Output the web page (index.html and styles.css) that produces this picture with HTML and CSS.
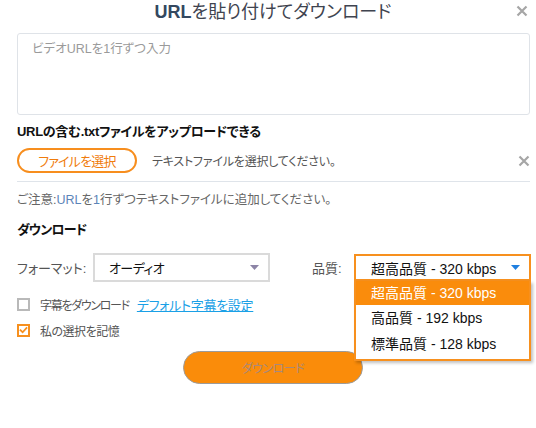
FILE: index.html
```html
<!DOCTYPE html>
<html lang="ja">
<head>
<meta charset="utf-8">
<link rel="stylesheet" href="styles.css">
</head>
<body>
<div class="dialog">
  <header class="head">
    <h1 class="title"><span class="title-url">URL</span>を貼り付けてダウンロード</h1>
    <span class="close">
      <svg width="12" height="12" viewBox="0 0 12 12"><path d="M1.5 1.5L10.5 10.5M10.5 1.5L1.5 10.5" stroke="#a6a6a6" stroke-width="2.2"/></svg>
    </span>
  </header>
  <div class="urlbox"><span class="placeholder">ビデオURLを1行ずつ入力</span></div>
  <div class="upload-label">URLの含む.txtファイルをアップロードできる</div>
  <div class="file-row">
    <button class="file-btn">ファイルを選択</button>
    <span class="file-hint">テキストファイルを選択してください。</span>
    <span class="file-clear">
      <svg width="12" height="12" viewBox="0 0 12 12"><path d="M1.5 1.5L10.5 10.5M10.5 1.5L1.5 10.5" stroke="#a6a6a6" stroke-width="2.2"/></svg>
    </span>
  </div>
  <div class="divider"></div>
  <div class="note">ご注意:<span class="hl">URL</span>を<span class="hl">1</span>行ずつテキストファイルに追加してください。</div>
  <div class="section">ダウンロード</div>
  <div class="opts-row">
    <span class="opt-label format-label">フォーマット:</span>
    <div class="select format-select">
      <span class="format-value">オーディオ</span>
      <svg class="arrow" width="9" height="5" viewBox="0 0 9 5"><path d="M0 0H9L4.5 5Z" fill="#8c84a6"/></svg>
    </div>
    <span class="opt-label quality-label">品質:</span>
    <div class="select quality-select">
      <span>超高品質 - 320 kbps</span>
      <svg class="arrow" width="9" height="5" viewBox="0 0 9 5"><path d="M0 0H9L4.5 5Z" fill="#1f7fe0"/></svg>
      <ul class="menu">
        <li class="active">超高品質 - 320 kbps</li>
        <li>高品質 - 192 kbps</li>
        <li>標準品質 - 128 kbps</li>
      </ul>
    </div>
  </div>
  <div class="check-row">
    <span class="box"></span>
    <span class="check-text sub-text">字幕をダウンロード</span>
    <a class="link">デフォルト字幕を設定</a>
  </div>
  <div class="check-row">
    <span class="box checked">
      <svg width="10" height="8" viewBox="0 0 10 8"><path d="M1 3.5L4 6.5L9 1" stroke="#f7901e" stroke-width="2" fill="none"/></svg>
    </span>
    <span class="check-text">私の選択を記憶</span>
  </div>
  <div class="actions">
    <button class="download">ダウンロード</button>
  </div>
</div>
</body>
</html>
```
FILE: styles.css
```css
* { box-sizing: border-box; }
html, body { margin: 0; padding: 0; background: #fff; }
body {
  font-family: "Liberation Sans", "Noto Sans CJK JP", sans-serif;
  font-feature-settings: "palt";
  color: #333;
  width: 536px;
  height: 428px;
  overflow: hidden;
  white-space: nowrap;
}
.dialog { padding: 0 6px 0 17px; }
.head {
  height: 33px;
  display: flex;
  align-items: flex-start;
  justify-content: center;
  position: relative;
}
.title {
  margin: 0;
  font-size: 18px;
  font-weight: normal;
  line-height: 24px;
  color: #3f4450;
  margin-left: -1px;
}
.title-url { font-weight: bold; color: #34485f; }
.close { position: absolute; right: 2px; top: 5px; display: flex; }
.urlbox {
  height: 82px;
  border: 1px solid #dfe3e8;
  border-radius: 3px;
  padding: 4px 14px;
}
.placeholder { font-size: 12.5px; color: #9a9a9a; }
.upload-label {
  margin-top: 7px;
  font-size: 13px;
  font-weight: bold;
  color: #111;
  line-height: 20px;
  letter-spacing: -0.3px;
}
.file-row {
  margin-top: 6px;
  display: flex;
  align-items: center;
  height: 25px;
}
.file-btn {
  width: 120px;
  height: 25px;
  border: 2px solid #f78e1e;
  border-radius: 13px;
  background: #fff;
  color: #f07c0c;
  font: 13px "Liberation Sans", "Noto Sans CJK JP", sans-serif;
  font-feature-settings: "palt";
  letter-spacing: -0.8px;
  padding: 0;
}
.file-hint { margin-left: 15px; font-size: 12px; color: #555; letter-spacing: -0.2px; }
.file-clear { margin-left: auto; display: flex; }
.divider { margin-top: 8px; height: 1px; background: #dfe4ea; }
.note {
  margin-top: 8px;
  font-size: 12.5px;
  line-height: 20px;
  color: #666;
}
.hl { color: #5b84b8; }
.section {
  margin-top: 10px;
  font-size: 13px;
  font-weight: bold;
  color: #111;
  line-height: 20px;
  letter-spacing: -0.8px;
}
.opts-row {
  margin-top: 13px;
  display: flex;
  align-items: center;
  height: 29px;
}
.opt-label { font-size: 13px; color: #555; flex-shrink: 0; }
.format-label { width: 76px; }
.select {
  position: relative;
  display: flex;
  align-items: center;
  justify-content: space-between;
  font-size: 14px;
  color: #111;
  flex-shrink: 0;
}
.format-value { font-size: 13px; letter-spacing: -0.6px; }
.format-select {
  width: 177px;
  height: 29px;
  border: 2px solid #dadada;
  padding: 0 9px 0 14px;
}
.quality-label { margin-left: 42px; width: 42px; }
.quality-select {
  width: 177px;
  height: 27px;
  border: 2px solid #f7901e;
  padding: 0 9px 0 15px;
}
.menu {
  position: absolute;
  left: -2px;
  top: 25px;
  width: 177px;
  margin: 0;
  padding: 0 0 2px;
  list-style: none;
  background: #fff;
  border: 2px solid #f7901e;
  border-top: none;
  box-shadow: 2px 2px 3px rgba(0,0,0,0.25);
}
.menu li {
  height: 26px;
  line-height: 26px;
  padding-left: 15px;
  font-size: 14px;
  color: #111;
}
.menu li.active { background: #fa8c0c; color: #fff; height: 24px; line-height: 24px; }
.check-row {
  display: flex;
  align-items: center;
  height: 26px;
  font-size: 12px;
}
.opts-row + .check-row { margin-top: 9px; }
.box {
  width: 13px;
  height: 13px;
  border: 2px solid #b9b9b9;
  display: flex;
  align-items: center;
  justify-content: center;
}
.box.checked { border-color: #f7901e; }
.check-text { margin-left: 10px; color: #555; letter-spacing: -0.5px; }
.sub-text { letter-spacing: -1.3px; }
.link { margin-left: 8px; font-size: 13px; color: #1aa0e6; text-decoration: underline; letter-spacing: -0.3px; }
.actions { display: flex; justify-content: center; margin-top: 8px; padding-right: 1px; }
.download {
  width: 180px;
  height: 33px;
  border-radius: 17px;
  border: 1px solid #9b9b9b;
  background: #fa8c0a;
  color: #a8897a;
  font: 12px "Liberation Sans", "Noto Sans CJK JP", sans-serif;
  font-feature-settings: "palt";
  letter-spacing: -0.5px;
  padding: 0;
}
```
